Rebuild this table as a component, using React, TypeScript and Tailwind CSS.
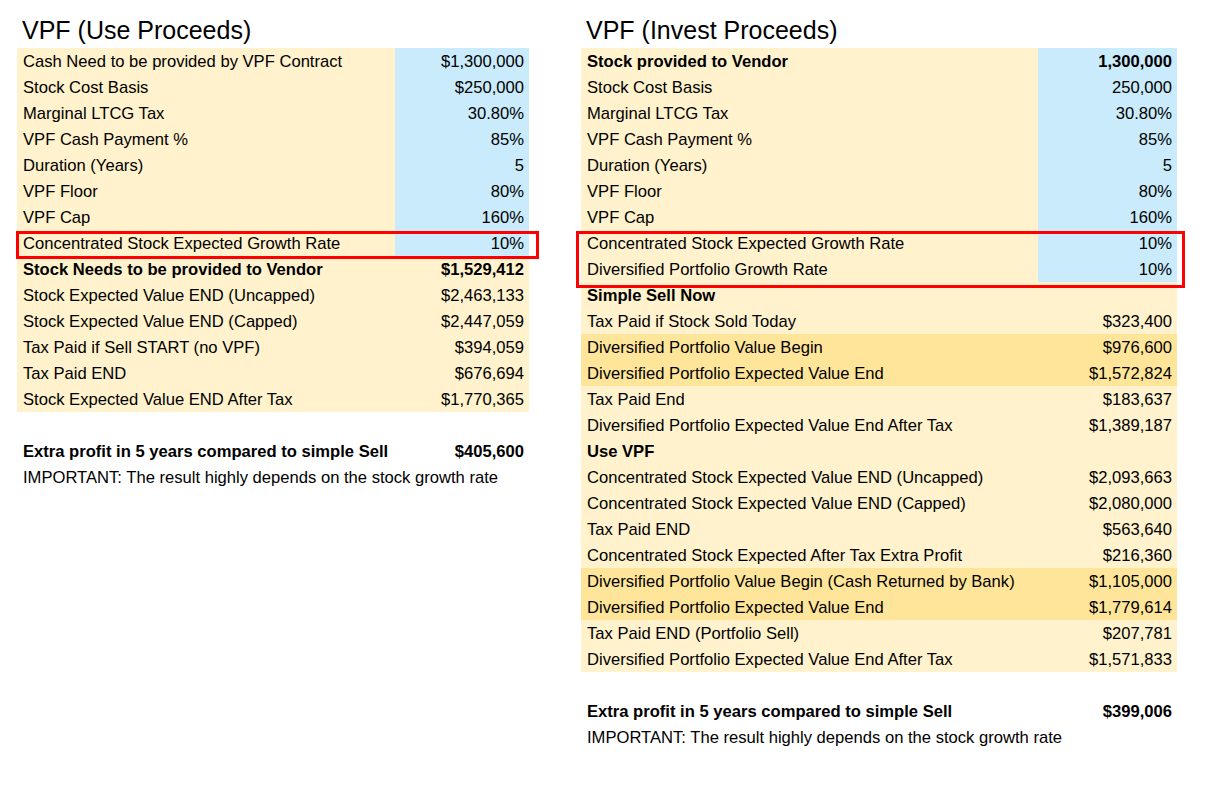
import React from 'react';

type Row = {
  label: string;
  value: string;
  bold?: boolean;
  input?: boolean;
  dark?: boolean;
};

const useRows: Row[] = [
  { label: 'Cash Need to be provided by VPF Contract', value: '$1,300,000', input: true },
  { label: 'Stock Cost Basis', value: '$250,000', input: true },
  { label: 'Marginal LTCG Tax', value: '30.80%', input: true },
  { label: 'VPF Cash Payment %', value: '85%', input: true },
  { label: 'Duration (Years)', value: '5', input: true },
  { label: 'VPF Floor', value: '80%', input: true },
  { label: 'VPF Cap', value: '160%', input: true },
  { label: 'Concentrated Stock Expected Growth Rate', value: '10%', input: true },
  { label: 'Stock Needs to be provided to Vendor', value: '$1,529,412', bold: true },
  { label: 'Stock Expected Value END (Uncapped)', value: '$2,463,133' },
  { label: 'Stock Expected Value END (Capped)', value: '$2,447,059' },
  { label: 'Tax Paid if Sell START (no VPF)', value: '$394,059' },
  { label: 'Tax Paid END', value: '$676,694' },
  { label: 'Stock Expected Value END After Tax', value: '$1,770,365' },
];

const investRows: Row[] = [
  { label: 'Stock provided to Vendor', value: '1,300,000', input: true, bold: true },
  { label: 'Stock Cost Basis', value: '250,000', input: true },
  { label: 'Marginal LTCG Tax', value: '30.80%', input: true },
  { label: 'VPF Cash Payment %', value: '85%', input: true },
  { label: 'Duration (Years)', value: '5', input: true },
  { label: 'VPF Floor', value: '80%', input: true },
  { label: 'VPF Cap', value: '160%', input: true },
  { label: 'Concentrated Stock Expected Growth Rate', value: '10%', input: true },
  { label: 'Diversified Portfolio Growth Rate', value: '10%', input: true },
  { label: 'Simple Sell Now', value: '', bold: true },
  { label: 'Tax Paid if Stock Sold Today', value: '$323,400' },
  { label: 'Diversified Portfolio Value Begin', value: '$976,600', dark: true },
  { label: 'Diversified Portfolio Expected Value End', value: '$1,572,824', dark: true },
  { label: 'Tax Paid End', value: '$183,637' },
  { label: 'Diversified Portfolio Expected Value End After Tax', value: '$1,389,187' },
  { label: 'Use VPF', value: '', bold: true },
  { label: 'Concentrated Stock Expected Value END (Uncapped)', value: '$2,093,663' },
  { label: 'Concentrated Stock Expected Value END (Capped)', value: '$2,080,000' },
  { label: 'Tax Paid END', value: '$563,640' },
  { label: 'Concentrated Stock Expected After Tax Extra Profit', value: '$216,360' },
  { label: 'Diversified Portfolio Value Begin (Cash Returned by Bank)', value: '$1,105,000', dark: true },
  { label: 'Diversified Portfolio Expected Value End', value: '$1,779,614', dark: true },
  { label: 'Tax Paid END (Portfolio Sell)', value: '$207,781' },
  { label: 'Diversified Portfolio Expected Value End After Tax', value: '$1,571,833' },
];

function Sheet({ title, rows, valueWidth, highlight, profit }: {
  title: string;
  rows: Row[];
  valueWidth: string;
  highlight: string;
  profit: string;
}) {
  return (
    <div className="flex flex-col">
      <h2 className="pl-[5px] text-[25px] leading-[32px] h-[34px] text-black">{title}</h2>
      <div className="relative">
        {rows.map((r, i) => (
          <div
            key={i}
            className={`flex h-[26px] items-center ${r.dark ? 'bg-[#ffe599]' : 'bg-[#fff2cc]'} ${r.bold ? 'font-bold' : ''}`}
          >
            <div className="flex-1 pl-[6px] pt-[2px] whitespace-nowrap">{r.label}</div>
            <div
              className={`${valueWidth} h-full flex items-center justify-end pr-[5px] pt-[2px] ${r.input ? 'bg-[#c9ebfb]' : ''}`}
            >
              {r.value}
            </div>
          </div>
        ))}
        <div className={`absolute border-[3px] border-[#ff0000] ${highlight}`} />
      </div>
      <div className="mt-[26px] flex h-[26px] items-center justify-between pl-[6px] pr-[5px] pt-[2px] font-bold">
        <span>Extra profit in 5 years compared to simple Sell</span>
        <span>{profit}</span>
      </div>
      <div className="flex h-[26px] items-center pl-[6px] pt-[2px]">
        IMPORTANT: The result highly depends on the stock growth rate
      </div>
    </div>
  );
}

export default function App() {
  return (
    <div
      className="min-h-screen bg-white text-black text-[16.6px] pt-[14px] pl-[17px] flex gap-[52px]"
      style={{ fontFamily: '"Liberation Sans", Arial, sans-serif' }}
    >
      <div className="w-[512px]">
        <Sheet
          title="VPF (Use Proceeds)"
          rows={useRows}
          valueWidth="w-[134px]"
          highlight="left-[-1px] right-[-10px] top-[183px] h-[28px]"
          profit="$405,600"
        />
      </div>
      <div className="w-[596px]">
        <Sheet
          title="VPF (Invest Proceeds)"
          rows={investRows}
          valueWidth="w-[139px]"
          highlight="left-[-5px] right-[-8px] top-[183px] h-[57px]"
          profit="$399,006"
        />
      </div>
    </div>
  );
}
